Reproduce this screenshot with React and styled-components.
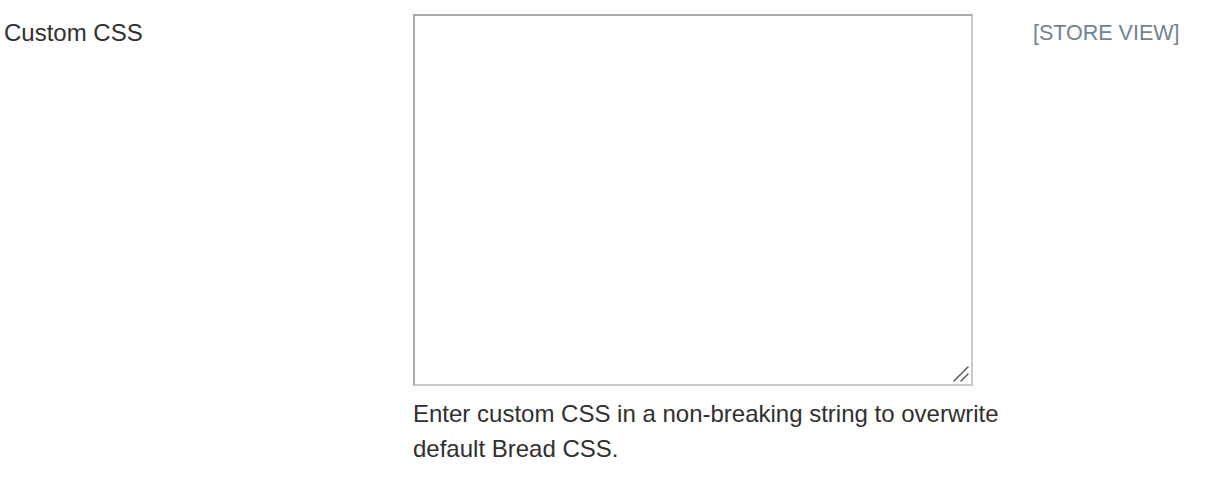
import React from "react";
import styled, { createGlobalStyle } from "styled-components";

const Global = createGlobalStyle`
  html, body { margin: 0; padding: 0; background: #ffffff; }
  body { font-family: "Liberation Sans", Arial, Helvetica, sans-serif; color: #303030; }
`;

const Row = styled.div`
  display: flex;
  align-items: flex-start;
  width: 1223px;
`;

const LabelCol = styled.div`
  box-sizing: border-box;
  width: 413px;
  padding: 17px 0 0 4px;
  font-size: 24px;
  line-height: 1.36;
  color: #303030;
`;

const ControlCol = styled.div`
  box-sizing: border-box;
  width: 620px;
  padding-top: 14px;
  display: flex;
  flex-direction: column;
`;

const AreaWrap = styled.div`
  position: relative;
  width: 560px;
  height: 372px;
`;

const Area = styled.textarea`
  display: block;
  box-sizing: border-box;
  width: 100%;
  height: 100%;
  margin: 0;
  padding: 6px;
  border: 2px solid;
  border-color: #a9a9a9 #c9c9c9 #c9c9c9 #a9a9a9;
  background: #ffffff;
  font-family: "Liberation Mono", monospace;
  font-size: 16px;
  outline: none;
  resize: none;
`;

const Grip = styled.svg`
  position: absolute;
  right: 3px;
  bottom: 3px;
  width: 18px;
  height: 18px;
  pointer-events: none;
`;

const Note = styled.div`
  margin-top: 10px;
  font-size: 24px;
  line-height: 35px;
  color: #303030;
`;

const ScopeCol = styled.div`
  padding-top: 19px;
  font-size: 21.5px;
  line-height: 1.36;
  color: #718390;
  white-space: nowrap;
`;

export default function App() {
  return (
    <>
      <Global />
      <Row>
        <LabelCol>Custom CSS</LabelCol>
        <ControlCol>
          <AreaWrap>
            <Area />
            <Grip viewBox="0 0 18 18">
              <path d="M2 16 L16 2" stroke="#555" strokeWidth="1.4" strokeLinecap="round" />
              <path d="M9 16 L16 9" stroke="#555" strokeWidth="1.4" strokeLinecap="round" />
            </Grip>
          </AreaWrap>
          <Note>
            Enter custom CSS in a non-breaking string to overwrite default Bread CSS.
          </Note>
        </ControlCol>
        <ScopeCol>[STORE VIEW]</ScopeCol>
      </Row>
    </>
  );
}
